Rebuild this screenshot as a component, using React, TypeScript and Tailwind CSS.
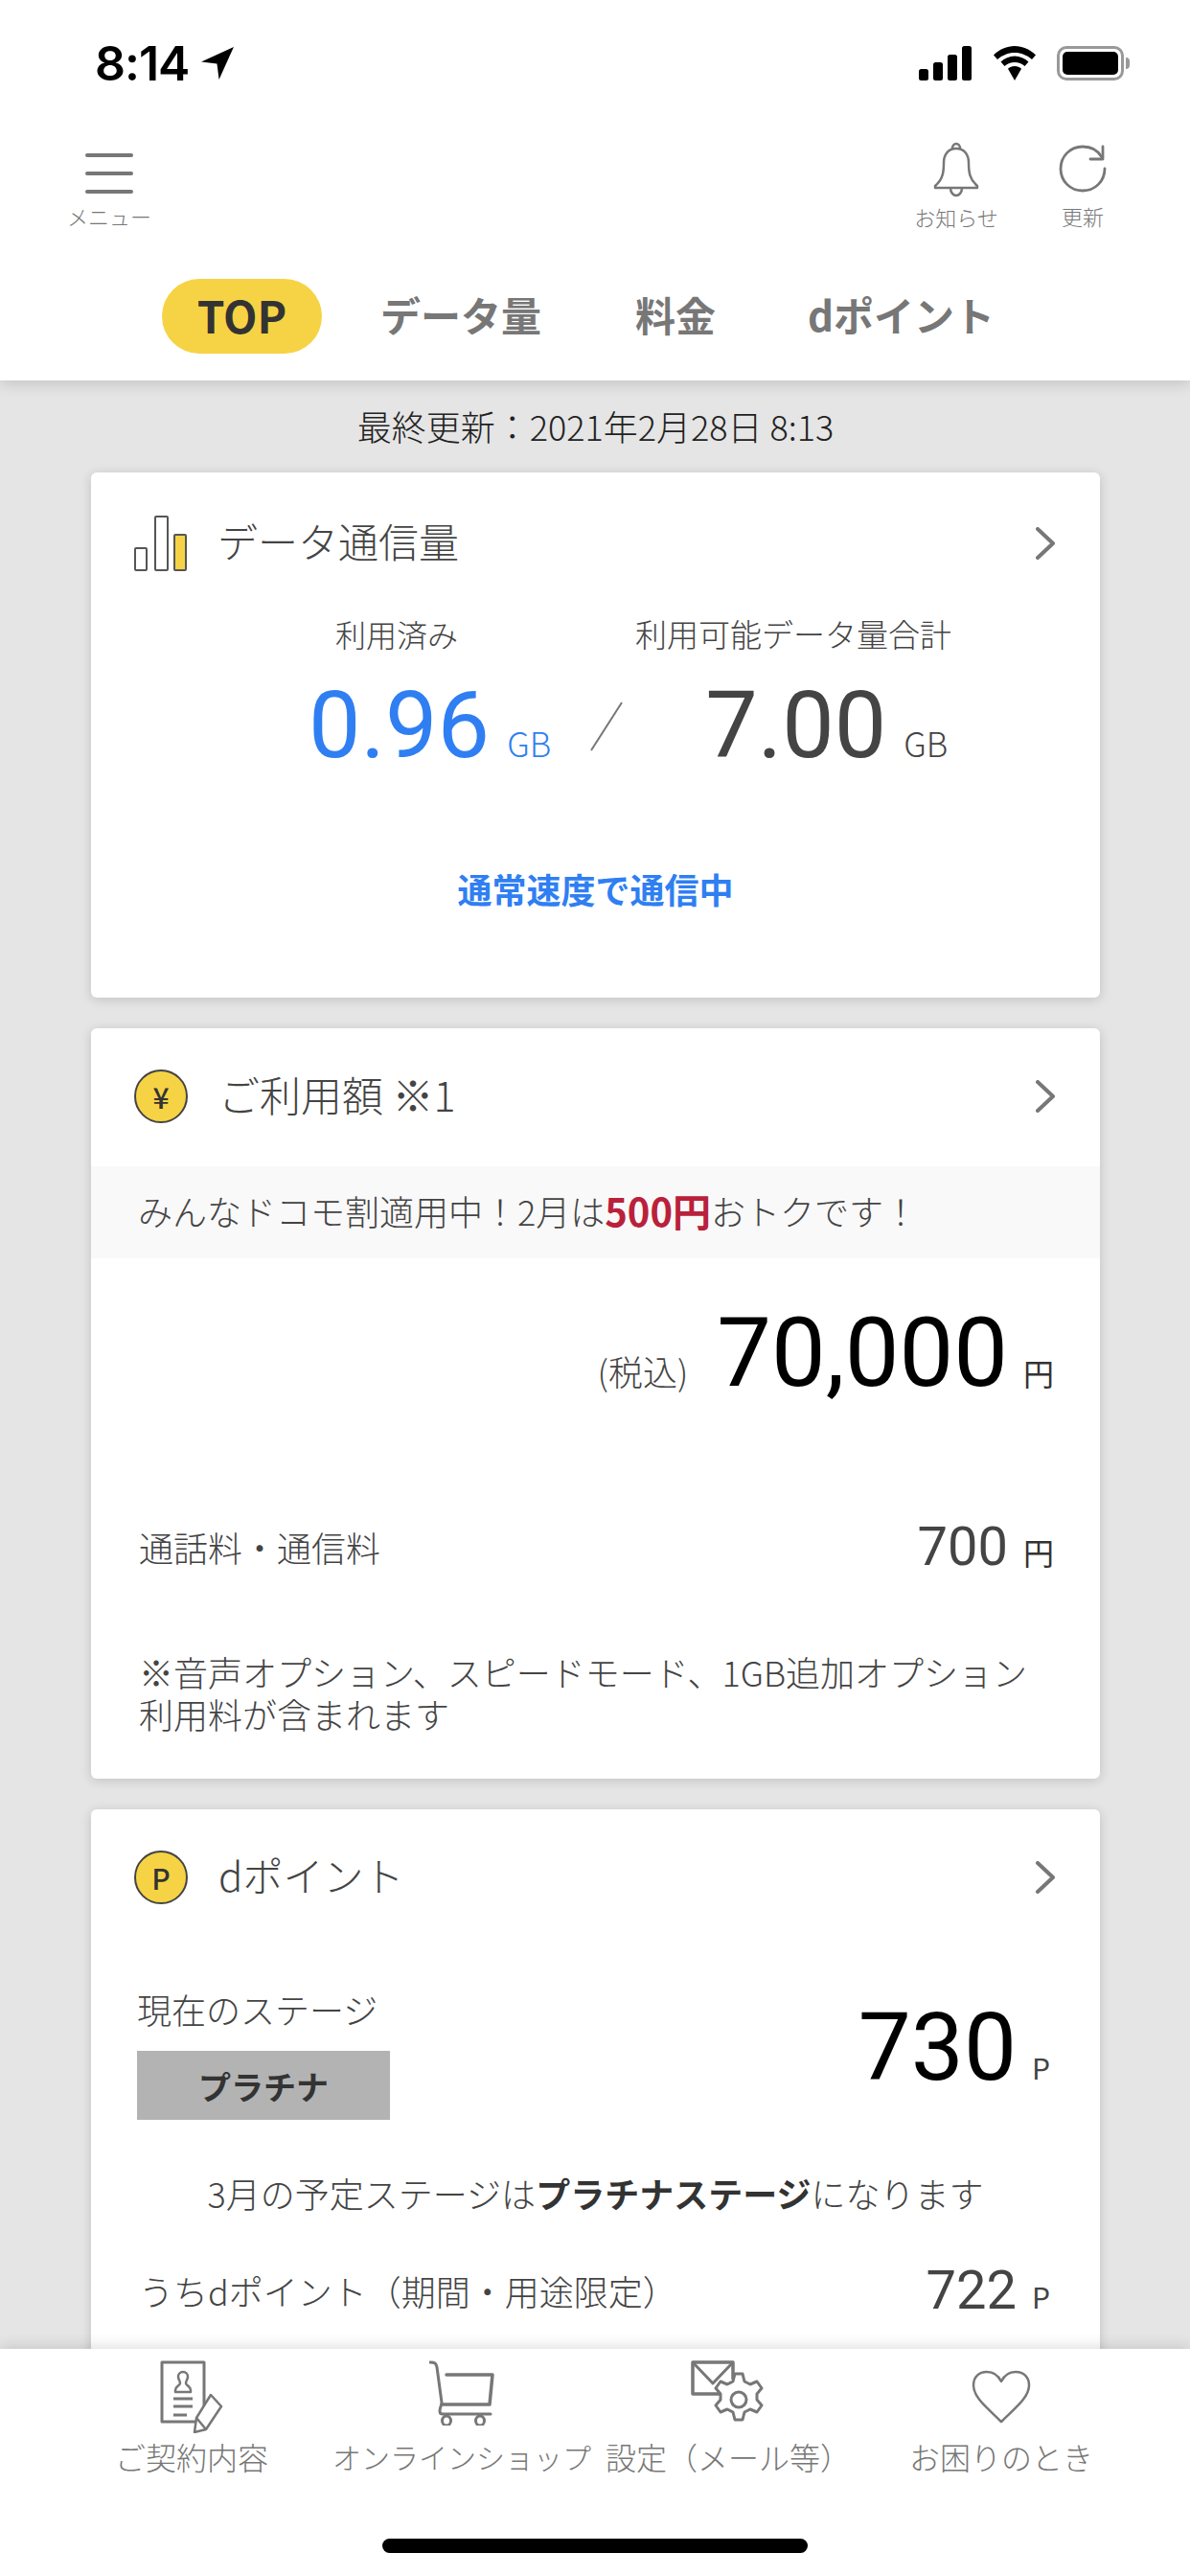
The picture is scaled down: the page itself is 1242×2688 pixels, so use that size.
import React from 'react';

const jp = "font-['Noto_Sans_CJK_JP',sans-serif]";
const num = "font-['Roboto',sans-serif]";

function Chevron() {
  return (
    <svg className="w-[22px] h-[34px] text-[#777]" fill="none" stroke="currentColor" viewBox="0 0 22 34">
      <path strokeWidth={4} strokeLinecap="round" strokeLinejoin="round" d="M3 2l16 15L3 32" />
    </svg>
  );
}

function Coin({ mark }: { mark: string }) {
  return (
    <div className="w-[56px] h-[56px] rounded-full bg-[#f6d344] border-2 border-[#444] flex items-center justify-center text-[#333] text-[30px] font-medium leading-none">
      {mark}
    </div>
  );
}

function BarsIcon() {
  return (
    <svg className="w-[56px] h-[60px]" viewBox="0 0 56 60" fill="none" stroke="#555" strokeWidth={2}>
      <rect x="1" y="35" width="12" height="23" rx="1" fill="#fff" />
      <rect x="22" y="2" width="13" height="56" rx="1" fill="#fff" />
      <rect x="42" y="21" width="12" height="37" rx="1" fill="#f6d344" />
    </svg>
  );
}

function CardHeader({ icon, title, titleClass = '', className = '' }: { icon: React.ReactNode; title: string; titleClass?: string; className?: string }) {
  return (
    <div className={`flex items-center pl-[45px] pr-[46px] ${className}`}>
      <div className="w-[56px] flex justify-center">{icon}</div>
      <div className={`text-[42px] leading-none text-[#444] font-light mb-[6px] ${titleClass}`}>{title}</div>
      <div className="ml-auto">
        <Chevron />
      </div>
    </div>
  );
}

function StatusBar() {
  return (
    <div className="h-[120px] flex items-start justify-between pl-[99px] pr-[63px] pt-[44px]">
      <div className="flex items-center gap-[12px]">
        <span className="font-['Inter',sans-serif] font-semibold text-[50px] leading-[44px] text-black tracking-[-1px]">8:14</span>
        <svg className="w-[36px] h-[36px]" viewBox="0 0 34 34">
          <path d="M33 1L1 15.500l15.500 2L18.500 33z" fill="#000" />
        </svg>
      </div>
      <div className="flex items-center gap-[20px] pt-[4px]">
        <svg className="w-[56px] h-[36px]" viewBox="0 0 56 36" fill="#000">
          <rect x="0" y="24" width="10" height="12" rx="2.500" />
          <rect x="15" y="17" width="10" height="19" rx="2.500" />
          <rect x="30" y="9" width="10" height="27" rx="2.500" />
          <rect x="45" y="0" width="10" height="36" rx="2.500" />
        </svg>
        <svg className="w-[48px] h-[36px]" viewBox="0 0 48 36" fill="#000">
          <path d="M24 7c7 0 13 2.700 18 7l4-4.500C40 3.500 32 0 24 0S8 3.500 2 9.500L6 14c5-4.300 11-7 18-7z" />
          <path d="M24 17c4 0 7.500 1.500 10.500 4l4-4.500C34.500 13 29.500 10.500 24 10.500S13.500 13 9.500 16.500l4 4.500c3-2.500 6.500-4 10.500-4z" />
          <path d="M24 21c-2.800 0-5 1-7 2.700L24 36l7-12.300C29 22 26.800 21 24 21z" />
        </svg>
        <div className="flex items-center gap-[2px]">
          <div className="w-[70px] h-[36px] rounded-[10px] border-[3px] border-[#999] p-[3px]">
            <div className="w-full h-full rounded-[5px] bg-black" />
          </div>
          <div className="w-[4px] h-[12px] rounded-r-full bg-[#999]" />
        </div>
      </div>
    </div>
  );
}

function TopBar() {
  return (
    <div className="h-[150px] flex items-start pl-[70px] pr-[90px] pt-[30px]">
      <div className="w-[88px] flex flex-col items-center">
        <div className="w-[50px] h-[42px] mt-[10px] flex flex-col justify-between">
          <div className="h-[4px] rounded-full bg-[#777]" />
          <div className="h-[4px] rounded-full bg-[#777]" />
          <div className="h-[4px] rounded-full bg-[#777]" />
        </div>
        <div className="mt-[11px] text-[22px] leading-[24px] text-[#777] font-light whitespace-nowrap">メニュー</div>
      </div>
      <div className="ml-auto w-[88px] flex flex-col items-center">
        <svg className="w-[50px] h-[58px] -mt-[2px] text-[#777]" viewBox="0 0 50 58" fill="none" stroke="currentColor" strokeWidth={2.500} strokeLinejoin="round">
          <path d="M25 7c-9 0-13 7-13 15 0 10-1 17-9 24v2h44v-2c-8-7-9-14-9-24 0-8-4-15-13-15z" />
          <path d="M21 7c0-3 2-5 4-5s4 2 4 5" />
          <path d="M19 48c0 5 3 8 6 8s6-3 6-8" />
        </svg>
        <div className="mt-[7px] text-[22px] leading-[26px] text-[#777] font-light whitespace-nowrap">お知らせ</div>
      </div>
      <div className="ml-[66px] w-[44px] flex flex-col items-center">
        <svg className="w-[50px] h-[50px] mt-[1px] text-[#777]" viewBox="0 0 50 50" fill="none" stroke="currentColor" strokeWidth={2.800} strokeLinecap="round" strokeLinejoin="round">
          <path d="M45 13C41 6 34 2 25 2 12 2 2 12 2 25s10 23 23 23 23-10 23-23" />
          <path d="M46 2v13H33" />
        </svg>
        <div className="mt-[11px] text-[22px] leading-[26px] text-[#777] font-light whitespace-nowrap">更新</div>
      </div>
    </div>
  );
}

function Tabs() {
  return (
    <div className="h-[127px] flex items-start pl-[169px] pt-[21px]">
      <div className="w-[167px] h-[78px] rounded-full bg-[#f6d344] flex items-center justify-center pb-[4px] text-[46px] font-bold text-[#333] leading-none">TOP</div>
      <div className="ml-[61px] h-[78px] flex items-center pb-[4px] text-[42px] font-bold text-[#777] leading-none whitespace-nowrap">データ量</div>
      <div className="ml-[98px] h-[78px] flex items-center pb-[4px] text-[42px] font-bold text-[#777] leading-none whitespace-nowrap">料金</div>
      <div className="ml-[96px] h-[78px] flex items-center pb-[4px] text-[42px] font-bold text-[#777] leading-none whitespace-nowrap">dポイント</div>
    </div>
  );
}

function DataCard() {
  return (
    <section className="h-[548px] rounded-[6px] bg-white shadow-[0_2px_12px_rgba(0,0,0,0.16)] pt-[44px]">
      <CardHeader icon={<BarsIcon />} title="データ通信量" titleClass="ml-[31px]" />
      <div className="mt-[42px] flex text-[32px] leading-[44px] text-[#444] font-light whitespace-nowrap">
        <div className="ml-[255px]">利用済み</div>
        <div className="ml-[185px] text-[33px]">利用可能データ量合計</div>
      </div>
      <div className="mt-[26px] flex items-baseline leading-none whitespace-nowrap">
        <span className={`ml-[227px] text-[97px] text-[#2f7ff2] ${num}`}>0.96</span>
        <span className="ml-[18px] text-[35px] text-[#2f7ff2] font-light">GB</span>
        <svg className="ml-[40px] w-[36px] h-[52px] self-center" viewBox="0 0 36 52">
          <path d="M34 1L2 51" stroke="#777" strokeWidth={2} />
        </svg>
        <span className={`ml-[85px] text-[97px] text-[#444] ${num}`}>7.00</span>
        <span className="ml-[18px] text-[35px] text-[#444] font-light">GB</span>
      </div>
      <div className="mt-[99px] text-center text-[36px] leading-[44px] font-bold text-[#2f7ff2]">通常速度で通信中</div>
    </section>
  );
}

function BillingCard() {
  return (
    <section className="h-[783px] rounded-[6px] bg-white shadow-[0_2px_12px_rgba(0,0,0,0.16)] pt-[43px]">
      <CardHeader icon={<Coin mark="¥" />} title="ご利用額 ※1" titleClass="ml-[32px] text-[43px]" />
      <div className="mt-[45px] h-[96px] bg-[#f9f9f9] flex items-center pl-[49px] pb-[4px] text-[36px] text-[#444] font-light whitespace-nowrap">
        みんなドコモ割適用中！2月は<span className="font-bold text-[40px] text-[#b9213b]">500円</span>おトクです！
      </div>
      <div className="mt-[48px] flex items-baseline justify-end pr-[48px] leading-none whitespace-nowrap">
        <span className="text-[36px] text-[#444] font-light">(税込)</span>
        <span className={`ml-[30px] text-[101px] text-black ${num}`}>70,000</span>
        <span className="ml-[16px] text-[32px] text-[#333]">円</span>
      </div>
      <div className="mt-[124px] flex items-center justify-between pl-[50px] pr-[48px] leading-none">
        <span className="text-[36px] text-[#444] font-light">通話料・通信料</span>
        <span className="flex items-baseline">
          <span className={`text-[56px] text-[#444] ${num}`}>700</span>
          <span className="ml-[16px] text-[32px] text-[#333]">円</span>
        </span>
      </div>
      <div className="mt-[80px] pl-[50px] pr-[60px] text-[36px] leading-[44px] text-[#444] font-light">
        ※音声オプション、スピードモード、1GB追加オプション利用料が含まれます
      </div>
    </section>
  );
}

function PointCard() {
  return (
    <section className="rounded-[6px] bg-white shadow-[0_2px_12px_rgba(0,0,0,0.16)] pt-[43px] pb-[60px]">
      <CardHeader icon={<Coin mark="P" />} title="dポイント" titleClass="ml-[32px]" />
      <div className="mt-[87px] flex items-start justify-between pl-[48px] pr-[52px]">
        <div>
          <div className="text-[36px] leading-[44px] text-[#444] font-light whitespace-nowrap">現在のステージ</div>
          <div className="mt-[22px] w-[264px] h-[72px] bg-[#b3b3b3] flex items-center justify-center text-[34px] font-bold text-[#333]">プラチナ</div>
        </div>
        <div className="mt-[14px] flex items-baseline leading-none">
          <span className={`text-[98px] text-black ${num}`}>730</span>
          <span className="ml-[16px] text-[30px] text-[#444]">P</span>
        </div>
      </div>
      <div className="mt-[54px] text-center text-[36px] leading-[44px] text-[#444] font-light whitespace-nowrap">
        3月の予定ステージは<span className="font-bold text-[#333]">プラチナステージ</span>になります
      </div>
      <div className="mt-[52px] flex items-center justify-between pl-[50px] pr-[52px] leading-none">
        <span className="text-[36px] text-[#444] font-light whitespace-nowrap">うちdポイント（期間・用途限定）</span>
        <span className="flex items-baseline">
          <span className={`text-[56px] text-[#444] ${num}`}>722</span>
          <span className="ml-[16px] text-[30px] text-[#444]">P</span>
        </span>
      </div>
    </section>
  );
}

function BottomNav() {
  return (
    <nav className="relative h-[237px] bg-white shadow-[0_-2px_14px_rgba(0,0,0,0.14)]">
      <div className="flex h-[150px] pl-[60px] text-[#777]">
        <div className="w-[280px] flex flex-col items-center">
          <svg className="mt-[12px] w-[66px] h-[76px]" viewBox="0 0 66 76" fill="none" stroke="currentColor" strokeWidth={2.500} strokeLinejoin="round">
            <path d="M46 50V2H2v62h36" strokeWidth={3} />
            <path d="M24 12c-3 0-5 2.500-5 5 0 3 2 4 2 7 0 2-5 3-5 7v2h16v-2c0-4-5-5-5-7 0-3 2-4 2-7 0-2.500-2-5-5-5z" />
            <path d="M14 40h20M14 48h20M14 57h14" strokeWidth={3} />
            <path d="M53 36l11 12-16 24-12 3 2-15z" fill="#fff" />
            <path d="M38 60l10 12" />
          </svg>
          <div className="mt-[2px] text-[32px] leading-[44px] font-light whitespace-nowrap">ご契約内容</div>
        </div>
        <div className="w-[284px] flex flex-col items-center">
          <svg className="mt-[12px] w-[68px] h-[68px]" viewBox="0 0 68 68" fill="none" stroke="currentColor" strokeWidth={3} strokeLinecap="round" strokeLinejoin="round">
            <path d="M1 2c5 0 6 1 7 5l5 37c0 3-2 5-2 9 0 2 1 3 3 3h50" />
            <path d="M18 15h48l-3 31H13" strokeWidth={3.500} />
            <ellipse cx="18" cy="63" rx="4.500" ry="5" />
            <ellipse cx="53" cy="63" rx="4.500" ry="5" />
          </svg>
          <div className="mt-[10px] text-[30px] leading-[44px] font-light whitespace-nowrap">オンラインショップ</div>
        </div>
        <div className="w-[272px] flex flex-col items-center">
          <svg className="mt-[12px] w-[78px] h-[74px]" viewBox="0 0 78 74" fill="none" stroke="currentColor" strokeWidth={3} strokeLinejoin="round">
            <path d="M31 35H2V2h42v18" strokeWidth={3.500} />
            <path d="M2 2l21 22L44 2" />
            <path d="M46 14h8l2 8 6 3 7-3 5 7-5 6v6l5 6-5 7-7-3-6 3-2 8h-8l-2-8-6-3-7 3-5-7 5-6v-6l-5-6 5-7 7 3 6-3z" fill="#fff" />
            <circle cx="50" cy="41" r="8" />
          </svg>
          <div className="mt-[4px] text-[32px] leading-[44px] font-light whitespace-nowrap">設定（メール等）</div>
        </div>
        <div className="w-[298px] flex flex-col items-center">
          <svg className="mt-[22px] w-[62px] h-[56px]" viewBox="0 0 62 56" fill="none" stroke="currentColor" strokeWidth={2.500} strokeLinejoin="round">
            <path d="M31 54C17 40 2 29 2 16 2 7 8 2 16 2c7 0 12 4 15 10C34 6 39 2 46 2c8 0 14 5 14 14 0 13-15 24-29 38z" />
          </svg>
          <div className="mt-[12px] text-[32px] leading-[44px] font-light whitespace-nowrap">お困りのとき</div>
        </div>
      </div>
      <div className="mt-[48px] mx-auto w-[444px] h-[15px] rounded-full bg-black" />
    </nav>
  );
}

export default function App() {
  return (
    <div className={`${jp} w-[1242px] h-[2688px] overflow-hidden flex flex-col bg-[#e5e5e5]`}>
      <header className="relative z-10 bg-white shadow-[0_4px_14px_rgba(0,0,0,0.14)]">
        <StatusBar />
        <TopBar />
        <Tabs />
      </header>
      <main className="flex-1 min-h-0 overflow-hidden pl-[95px] pr-[94px]">
        <div className="h-[96px] flex items-center justify-center pb-[3px] text-[36px] leading-none text-[#222] font-light">最終更新：2021年2月28日 8:13</div>
        <div className="flex flex-col gap-[32px]">
          <DataCard />
          <BillingCard />
          <PointCard />
        </div>
      </main>
      <BottomNav />
    </div>
  );
}
